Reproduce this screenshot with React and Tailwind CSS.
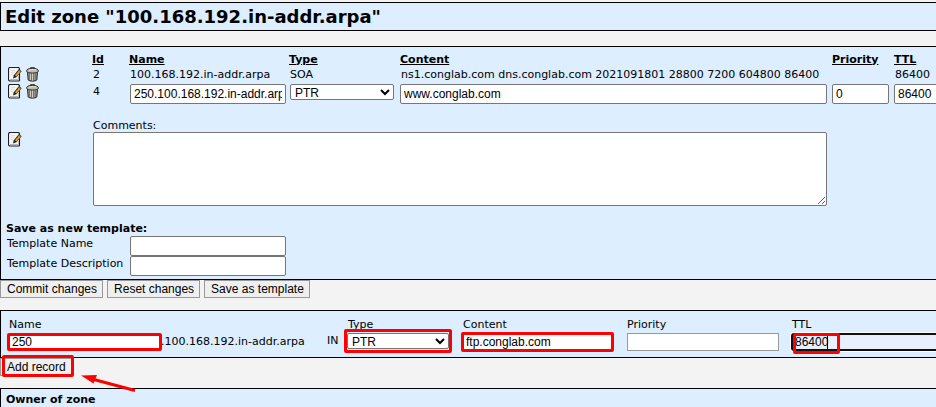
import React from "react";

const inputBase =
  "block rounded-[2px] border border-[#767676] bg-white px-[3px] text-[12px] font-['Liberation_Sans',sans-serif] text-black outline-none";
const buttonBase =
  "h-[18px] border border-[#999999] bg-[#efefef] pr-[5px] pl-[6px] text-[12px] leading-4 font-['Liberation_Sans',sans-serif] text-black";
const selectBase =
  "block rounded-[2px] border border-[#767676] bg-white text-[12px] leading-[14px] font-['Liberation_Sans',sans-serif] text-black";

function EditIcon() {
  return (
    <svg width="14" height="15" viewBox="0 0 14 15" aria-hidden="true">
      <path d="M1.500 .5h9l1 1v12l-.5.500H1.500l-1-1v-11.500z" fill="#f4f4f2" stroke="#1c2024" strokeWidth="1.100" />
      <path d="M3 3.500h4M3 5.500h3M3 7.500h2" stroke="#dfe0e0" strokeWidth="1" />
      <path d="M2 12.500h8.500V9" fill="none" stroke="#b4b7b7" strokeWidth="1" />
      <path d="M5 11.500l.8-3.300L11 2l2.700 2.200L8.400 10.300z" fill="#2b241a" />
      <path d="M7 8.300L11 3.500l1.600 1.300-4.200 4.700z" fill="#d9a437" />
      <path d="M11 2.500l2.200 1.700-.7.900-2-1.700z" fill="#8a7648" />
    </svg>
  );
}

function TrashIcon() {
  return (
    <svg width="14" height="15" viewBox="0 0 14 15" aria-hidden="true">
      <path d="M1.500 5h10l-.7 8c-1.500 1.500-7 1.500-8.600 0z" fill="#a19f91" stroke="#24231f" strokeWidth="1" />
      <path d="M4.500 6.500v6.500M6.500 6.500V13.500" stroke="#d2d0c2" strokeWidth="1" />
      <path d="M3.500 6.500l.2 6M5.500 6.500v7M7.500 6.500v7M9.500 6.500l-.3 6" stroke="#5f5e54" strokeWidth=".7" />
      <path d="M.6 3.900c0-1.700 2.200-2.500 5.900-2.500s5.900.8 5.900 2.500S10.200 6 6.500 6 .6 5.600.6 3.900z" fill="#bdbbae" stroke="#35342f" strokeWidth="1" />
      <path d="M3 3.500c1-1 5.500-1.200 7-.5" fill="none" stroke="#e8e6da" strokeWidth="1" />
      <path d="M4.500 1.300V.6h4v.700" fill="none" stroke="#35342f" strokeWidth="1" />
    </svg>
  );
}

function RowIcons() {
  return (
    <div className="flex gap-1 pl-[7px]">
      <button type="button" aria-label="Edit record"><EditIcon /></button>
      <button type="button" aria-label="Delete record"><TrashIcon /></button>
    </div>
  );
}

function Panel({ className = "", children }) {
  return (
    <section className={"overflow-hidden border-t border-l border-black bg-[#dceeff] " + className}>
      {children}
    </section>
  );
}

function Highlight({ className }) {
  return <span aria-hidden="true" className={"pointer-events-none absolute rounded-[2px] border-3 border-[#ff0000] " + className} />;
}

export default function App() {
  const headings = ["Id", "Name", "Type", "Content", "Priority", "TTL"];
  return (
    <main className="min-h-screen overflow-hidden bg-[#f3f3f3] pt-[2px] font-['DejaVu_Sans',Verdana,sans-serif] text-[11px] leading-[14px] text-black">
      <Panel className="border-b px-1">
        <h1 className="text-[18px] leading-[27px] font-bold whitespace-nowrap">Edit zone "100.168.192.in-addr.arpa"</h1>
      </Panel>

      <form onSubmit={(e) => e.preventDefault()}>
        <Panel className="mt-[15px] border-b pt-[5px] pb-[3px]">
          <table className="w-full table-fixed">
            <colgroup>
              <col className="w-[91px]" />
              <col className="w-[37px]" />
              <col className="w-[160px]" />
              <col className="w-[111px]" />
              <col />
              <col className="w-[62px]" />
              <col className="w-[42px]" />
            </colgroup>
            <thead>
              <tr className="h-[15px] text-left text-[11px]">
                <td />
                {headings.map((h) => (
                  <th key={h} scope="col" className="p-0">
                    <a href="#sort" className="underline">{h}</a>
                  </th>
                ))}
              </tr>
            </thead>
            <tbody>
              <tr className="h-[17px] align-top leading-4 whitespace-nowrap">
                <td><RowIcons /></td>
                <td className="pl-px">2</td>
                <td className="pl-px">100.168.192.in-addr.arpa</td>
                <td className="pl-px">SOA</td>
                <td className="pl-px">ns1.conglab.com dns.conglab.com 2021091801 28800 7200 604800 86400</td>
                <td />
                <td className="pl-px">86400</td>
              </tr>
              <tr className="h-5 align-top leading-4">
                <td><RowIcons /></td>
                <td className="pl-px">4</td>
                <td className="pl-px"><input aria-label="Name" className={inputBase + " h-5 w-[156px]"} defaultValue="250.100.168.192.in-addr.arpa" /></td>
                <td className="pl-px">
                  <select aria-label="Type" className={selectBase + " h-4 w-[104px]"}><option>PTR</option></select>
                </td>
                <td className="pr-[5px]"><input aria-label="Content" className={inputBase + " h-5 w-full"} defaultValue="www.conglab.com" /></td>
                <td><input aria-label="Priority" className={inputBase + " h-5 w-[57px]"} defaultValue="0" /></td>
                <td><input aria-label="TTL" className={inputBase + " h-5 w-[60px]"} defaultValue="86400" /></td>
              </tr>
            </tbody>
          </table>

          <div className="mt-[14px] flex pr-[109px]">
            <div className="w-[92px] shrink-0 pt-[14px] pl-[7px]">
              <button type="button" aria-label="Edit comments"><EditIcon /></button>
            </div>
            <div className="flex-1">
              <label htmlFor="comments" className="block h-[14px] leading-4">Comments:</label>
              <textarea id="comments" className="block h-[74px] w-full rounded-[2px] border border-[#767676] bg-white outline-none" />
            </div>
          </div>

          <h2 className="mt-4 pl-[5px] font-bold">Save as new template:</h2>
          <div className="flex h-5 pl-[6px] leading-4">
            <label htmlFor="tname" className="w-[123px]">Template Name</label>
            <input id="tname" className={inputBase + " h-5 w-[156px]"} />
          </div>
          <div className="flex h-5 pl-[6px] leading-4">
            <label htmlFor="tdesc" className="w-[123px] whitespace-nowrap">Template Description</label>
            <input id="tdesc" className={inputBase + " h-5 w-[156px]"} />
          </div>
        </Panel>
        <div className="flex gap-1">
          <button type="submit" className={buttonBase}>Commit changes</button>
          <button type="reset" className={buttonBase}>Reset changes</button>
          <button type="button" className={buttonBase}>Save as template</button>
        </div>
      </form>

      <form className="mt-3" onSubmit={(e) => e.preventDefault()}>
        <Panel className="border-b pt-[6px] pb-[6px]">
          <div className="flex whitespace-nowrap">
            <div className="w-[326px] shrink-0 pl-[7px]">
              <label htmlFor="rname" className="block h-4 pl-px leading-4">Name</label>
              <div className="flex items-center">
                <div className="relative">
                  <input id="rname" className={inputBase + " h-[18px] w-[153px]"} defaultValue="250" />
                  <Highlight className="-inset-x-px top-0 h-[18px]" />
                </div>
                <span>.100.168.192.in-addr.arpa</span>
              </div>
            </div>
            <div className="w-5 shrink-0 pt-4 leading-4">IN</div>
            <div className="w-[115px] shrink-0">
              <label htmlFor="rtype" className="block h-4 pl-px leading-4">Type</label>
              <div className="relative w-[102px]">
                <select id="rtype" className={selectBase + " h-4 w-full"}><option>PTR</option></select>
                <Highlight className="-inset-x-[3px] -inset-y-1" />
              </div>
            </div>
            <div className="w-[165px] shrink-0">
              <label htmlFor="rcontent" className="block h-4 pl-px leading-4">Content</label>
              <div className="relative w-[151px]">
                <input id="rcontent" className={inputBase + " h-[18px] w-full"} defaultValue="ftp.conglab.com" />
                <Highlight className="-inset-x-px -inset-y-px" />
              </div>
            </div>
            <div className="w-[164px] shrink-0">
              <label htmlFor="rprio" className="block h-4 leading-4">Priority</label>
              <input id="rprio" className="block h-[18px] w-[152px] border border-[#999999] bg-white px-[3px] text-[12px] outline-none" />
            </div>
            <div className="min-w-[160px] flex-1">
              <label htmlFor="rttl" className="block h-4 pl-px leading-4">TTL</label>
              <div className="relative">
                <input
                  id="rttl"
                  className="block h-[18px] w-full rounded-[3px] border-2 border-[#101010] bg-[#e8f0fe] px-[2px] text-[12px] ring-1 ring-white outline-none font-['Liberation_Sans',sans-serif]"
                  defaultValue="86400"
                />
                <span aria-hidden="true" className="absolute top-[2px] left-9 h-[14px] w-px bg-black" />
                <Highlight className="top-0 left-[2px] h-[21px] w-[47px]" />
              </div>
            </div>
          </div>
        </Panel>
        <div className="relative flex">
          <button type="submit" className={buttonBase}>Add record</button>
          <Highlight className="-top-[3px] left-[2px] h-[22px] w-[72px]" />
          <svg className="pointer-events-none absolute top-[15px] left-20" width="58" height="22" viewBox="0 0 58 22" aria-hidden="true">
            <path d="M12 6L55 17.500" stroke="#ff0000" strokeWidth="3" />
            <path d="M1 2.500L17 2L13.500 10.500z" fill="#ff0000" />
          </svg>
        </div>
      </form>

      <Panel className="mt-3 pt-[4px] pl-[5px]">
        <h2 className="font-bold">Owner of zone</h2>
      </Panel>
    </main>
  );
}
